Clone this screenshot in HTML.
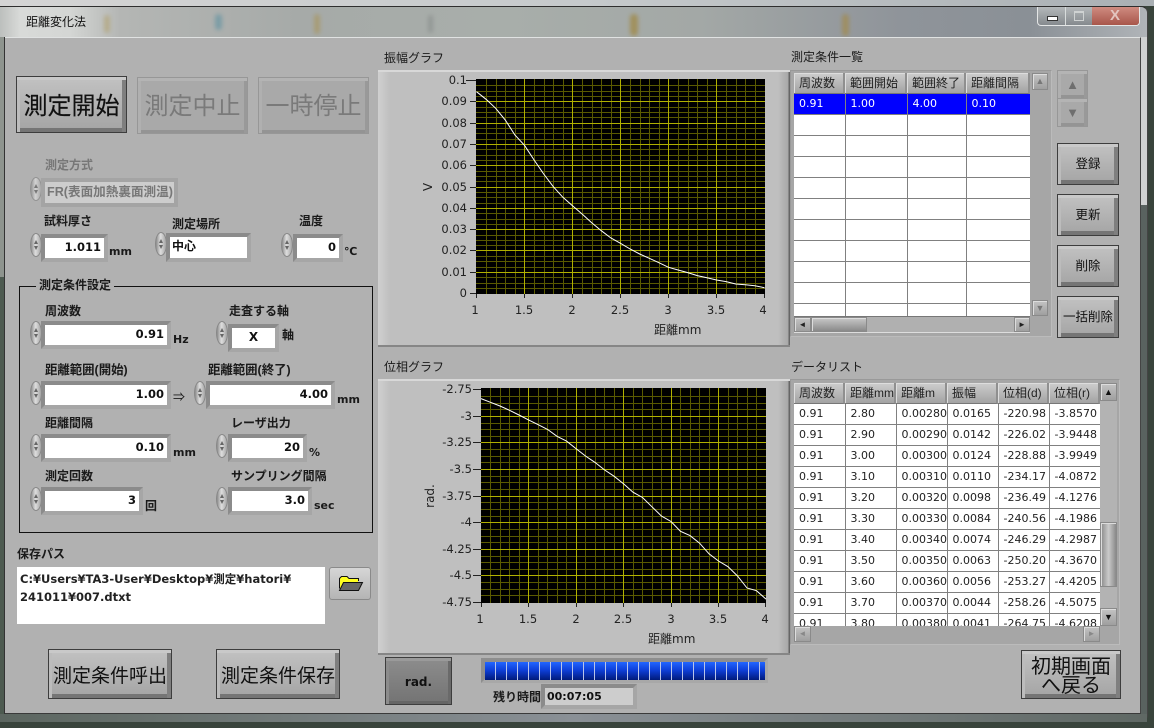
<!DOCTYPE html>
<html lang="ja"><head><meta charset="utf-8"><title>距離変化法</title>
<style>
html,body{margin:0;padding:0}
body{width:1154px;height:728px;overflow:hidden;position:relative;background:#39443c;font-family:"Liberation Sans","Noto Sans CJK JP",sans-serif;color:#111}
div{box-sizing:border-box}
.a,.t,.s,.f,.b,.d{position:absolute}
.t{white-space:nowrap;line-height:16px;font-size:12px;font-weight:700;color:#1a1a1a}
.r{font-weight:400}
.g{color:#777}
.u{font-family:"DejaVu Sans","Noto Sans CJK JP",sans-serif;font-weight:700;font-size:11px}
.s{width:12px;height:24px;border-radius:50%;background:linear-gradient(90deg,#8c8c8c,#dedede 45%,#a5a5a5);border:1px solid #888}
.s:before,.s:after{content:"";position:absolute;left:3px;border-left:2px solid transparent;border-right:2px solid transparent}
.s:before{top:6px;border-bottom:4px solid #666}
.s:after{bottom:6px;border-top:4px solid #666}
.f{border-style:solid;border-width:4px;border-color:#8b8b8b #a6a6a6 #a6a6a6 #8b8b8b;background:#fff;font:700 11.5px/19px "DejaVu Sans","Noto Sans CJK JP",sans-serif;text-align:right;padding:0 3px;color:#111;white-space:nowrap;overflow:hidden}
.b{background:linear-gradient(#c2c2c2,#a4a4a4);border:1px solid #3d3d3d;box-shadow:inset 0 3px 0 #c9c9c9,inset 3px 0 0 #bcbcbc,inset -4px 0 0 #7f7f7f,inset 0 -4px 0 #757575;text-align:center;color:#111;white-space:nowrap}
.x{background:#a9a9a9;border:1px solid #979797;box-shadow:inset 0 3px 0 #b4b4b4,inset 3px 0 0 #b0b0b0,inset -3px 0 0 #999,inset 0 -3px 0 #949494;color:#7a7a7a}
.d{background:linear-gradient(#c3c3c3,#9f9f9f);border:1px solid #8a8a8a;box-shadow:inset 1px 1px 0 #ddd;font-size:9px;line-height:14px;text-align:center;color:#222;overflow:hidden}
.gf{position:absolute;left:378px;width:412px;background:linear-gradient(90deg,#d0d0d0 0,#bfbfbf 12px,#bfbfbf 400px,#a8a8a8 410px,#666 411px);border-top:2px solid #d8d8d8;border-bottom:2px solid #868686}
.tb{position:absolute;overflow:hidden;background:#fff}
table{border-collapse:collapse;table-layout:fixed;font:11px/20px "DejaVu Sans","Noto Sans CJK JP",sans-serif;color:#222}
td{border:solid #808080;border-width:0 1px 1px 0;height:20px;padding:0 0 0 5px;overflow:hidden;white-space:nowrap;box-sizing:content-box}
.h{position:absolute;top:0;height:21px;background:linear-gradient(#cdcdcd,#a3a3a3);border-right:2px solid #8f8f8f;border-bottom:1px solid #777;box-shadow:inset 1px 1px 0 #ddd;font-size:12px;line-height:20px;padding-left:5px;white-space:nowrap;overflow:hidden;color:#222}
.sel td{background:#0000ff;color:#fff}
.bl{position:absolute;border-radius:5px;filter:blur(2px)}
</style></head><body>

<!-- window chrome -->
<div class="a" style="left:0;top:0;width:1154px;height:6px;background:linear-gradient(90deg,#d4d4d4,#c6cacc 50%,#aab0b4)"></div>
<div class="a" style="left:0;top:6px;width:1148px;height:716px;background:#6f7a78;border-top:1px solid #2e2e2e;border-right:1px solid #444;border-radius:0 7px 7px 0;overflow:hidden">
<div class="a" style="left:0;top:0;width:1147px;height:30px;background:linear-gradient(90deg,#bcbfbd 0,#d8dad8 20px,#d4d6d4 70px,#b4b6b4 120px,#a6aaa8 300px,#a8aeaa 500px,#a3a8a6 700px,#8f949a 900px,#8a9096 1030px,#b0b4b8 1147px)"></div>
</div>
<div class="bl" style="left:104px;top:15px;width:6px;height:18px;background:#b3a67c;opacity:.75"></div>
<div class="bl" style="left:215px;top:14px;width:7px;height:16px;background:#6f98a4;opacity:.8"></div>
<div class="bl" style="left:314px;top:14px;width:6px;height:20px;background:#a89868;opacity:.8"></div>
<div class="bl" style="left:428px;top:15px;width:5px;height:18px;background:#8d9290;opacity:.8"></div>
<div class="bl" style="left:630px;top:14px;width:8px;height:22px;background:#a08c50;opacity:.85"></div>
<div class="bl" style="left:842px;top:14px;width:7px;height:22px;background:#a08c58;opacity:.85"></div>
<div class="a" style="left:1141px;top:37px;width:6px;height:168px;background:#d0d2d2"></div>
<div class="a" style="left:1141px;top:205px;width:6px;height:512px;background:#59625f"></div>
<div class="a" style="left:0;top:37px;width:4px;height:240px;background:#8e948e"></div>
<div class="a" style="left:0;top:277px;width:4px;height:445px;background:#4d5a50"></div>
<div class="a" style="left:0;top:714px;width:1147px;height:8px;background:linear-gradient(90deg,#5c6660,#8a9096 50%,#5f6864)"></div>
<div class="t" style="left:26px;top:14px;font-weight:400;color:#111">距離変化法</div>

<!-- window buttons -->
<div class="a" style="left:1037px;top:7px;width:103px;height:19px;border:1px solid #e4e6e6;border-top:0;border-radius:0 0 4px 4px;overflow:hidden;background:linear-gradient(#b4b8ba,#858a8e)">
  <div class="a" style="left:27px;top:0;width:1px;height:18px;background:#d8dcdc"></div>
  <div class="a" style="left:9px;top:9px;width:11px;height:5px;background:#fff;border:1px solid #333"></div>
  <div class="a" style="left:36px;top:4px;width:10px;height:10px;border:1px solid #cfd2d2;border-top-width:2px"></div>
  <div class="a" style="left:54px;top:0;width:49px;height:18px;background:linear-gradient(#cf8b80,#a8564a)"></div>
  <div class="t r" style="left:72px;top:1px;font-size:15px;font-weight:700;color:#e3c5bf">X</div>
</div>

<!-- panel -->
<div class="a" style="left:4px;top:37px;width:1137px;height:677px;background:#b1b1b1;border:1px solid #e0e2e2;border-bottom-color:#3a3a3a;border-right-color:#444"></div>
<div class="a" style="left:4px;top:37px;width:1px;height:677px;background:#333"></div>

<!-- top buttons -->
<div class="b" style="left:16px;top:76px;width:111px;height:57px;font-size:24px;line-height:60px;-webkit-text-stroke:.15px #111">測定開始</div>
<div class="b x" style="left:137px;top:77px;width:111px;height:57px;font-size:24px;line-height:58px">測定中止</div>
<div class="b x" style="left:258px;top:77px;width:111px;height:57px;font-size:24px;line-height:58px">一時停止</div>

<div class="t g" style="left:45px;top:157px">測定方式</div>
<div class="s" style="left:30px;top:177px;opacity:.75"></div>
<div class="f" style="left:41px;top:178px;width:137px;height:29px;background:#cdcdcd;border-color:#a4a4a4;color:#777;text-align:left;padding:0 0 0 2px;font:700 12.6px/20px 'Liberation Sans','Noto Sans CJK JP',sans-serif">FR(表面加熱裏面測温)</div>

<div class="t" style="left:44px;top:213px">試料厚さ</div>
<div class="s" style="left:30px;top:233px"></div>
<div class="f" style="left:41px;top:234px;width:67px;height:28px">1.011</div>
<div class="t u" style="left:109px;top:244px">mm</div>

<div class="t" style="left:172px;top:216px">測定場所</div>
<div class="s" style="left:155px;top:232px"></div>
<div class="f" style="left:166px;top:233px;width:85px;height:29px;text-align:left;padding-left:2px;font-size:12px">中心</div>

<div class="t" style="left:299px;top:213px">温度</div>
<div class="s" style="left:281px;top:233px"></div>
<div class="f" style="left:293px;top:234px;width:50px;height:28px">0</div>
<div class="t u" style="left:344px;top:244px">℃</div>

<!-- group -->
<div class="a" style="left:19px;top:286px;width:354px;height:247px;border:1px solid #111"></div>
<div class="t" style="left:36px;top:277px;background:#b1b1b1;padding:0 3px">測定条件設定</div>

<div class="t" style="left:45px;top:303px">周波数</div>
<div class="s" style="left:30px;top:321px"></div>
<div class="f" style="left:41px;top:321px;width:130px;height:28px">0.91</div>
<div class="t u" style="left:173px;top:332px">Hz</div>

<div class="t" style="left:229px;top:303px">走査する軸</div>
<div class="s" style="left:216px;top:321px"></div>
<div class="f" style="left:228px;top:324px;width:51px;height:28px;text-align:center;font-size:12px">X</div>
<div class="t" style="left:282px;top:327px">軸</div>

<div class="t" style="left:45px;top:362px;font-size:12.4px">距離範囲(開始)</div>
<div class="s" style="left:30px;top:381px"></div>
<div class="f" style="left:41px;top:381px;width:130px;height:28px">1.00</div>
<div class="t" style="left:173px;top:389px;font-weight:400">⇒</div>

<div class="t" style="left:208px;top:362px;font-size:12.4px">距離範囲(終了)</div>
<div class="s" style="left:194px;top:381px"></div>
<div class="f" style="left:206px;top:381px;width:129px;height:28px">4.00</div>
<div class="t u" style="left:337px;top:392px">mm</div>

<div class="t" style="left:45px;top:415px">距離間隔</div>
<div class="s" style="left:30px;top:434px"></div>
<div class="f" style="left:41px;top:434px;width:130px;height:28px">0.10</div>
<div class="t u" style="left:173px;top:445px">mm</div>

<div class="t" style="left:231px;top:415px">レーザ出力</div>
<div class="s" style="left:216px;top:434px"></div>
<div class="f" style="left:228px;top:434px;width:79px;height:28px">20</div>
<div class="t u" style="left:309px;top:445px">%</div>

<div class="t" style="left:45px;top:468px">測定回数</div>
<div class="s" style="left:30px;top:487px"></div>
<div class="f" style="left:41px;top:487px;width:102px;height:28px">3</div>
<div class="t" style="left:145px;top:498px">回</div>

<div class="t" style="left:231px;top:468px">サンプリング間隔</div>
<div class="s" style="left:216px;top:487px"></div>
<div class="f" style="left:228px;top:487px;width:84px;height:28px">3.0</div>
<div class="t u" style="left:314px;top:498px">sec</div>

<!-- save path -->
<div class="t" style="left:17px;top:546px">保存パス</div>
<div class="a" style="left:17px;top:567px;width:308px;height:57px;background:#fff;padding:3px 3px;font:700 11.5px/18px 'DejaVu Sans','Noto Sans CJK JP',sans-serif;color:#222;white-space:nowrap">C:¥Users¥TA3-User¥Desktop¥測定¥hatori¥<br>241011¥007.dtxt</div>
<div class="a" style="left:329px;top:567px;width:42px;height:33px;background:linear-gradient(#d6d6d6,#b4b4b4);border:1px solid #8a8a8a;border-radius:3px">
<svg width="40" height="31" style="position:absolute;left:0;top:0"><path d="M9.5 20.5V10.5L11.5 8.5H17L19 10.5H28.5V13" fill="#ffff20" stroke="#111"/><rect x="10" y="11" width="18" height="3" fill="#ffff20"/><path d="M9.5 22.5L13.5 14.5H32.5L28.5 22.5Z" fill="#666" stroke="#111"/></svg></div>

<div class="b" style="left:48px;top:649px;width:124px;height:50px;font-size:19px;line-height:53px">測定条件呼出</div>
<div class="b" style="left:216px;top:649px;width:124px;height:50px;font-size:19px;line-height:53px">測定条件保存</div>

<!-- graphs -->
<div class="t r" style="left:384px;top:50px">振幅グラフ</div>
<div class="gf" style="top:70px;height:277px"></div>
<div class="t r" style="left:384px;top:359px">位相グラフ</div>
<div class="gf" style="top:379px;height:276px"></div>

<svg class="a" width="1154" height="728" style="left:0;top:0;position:absolute" font-family="'DejaVu Sans','Noto Sans CJK JP',sans-serif" font-size="11.5" fill="#222">
<rect x="476" y="79" width="289" height="215" fill="#000"/>
<path shape-rendering="crispEdges" stroke="#5a5a00" fill="none" d="M486.5 79V294M496.5 79V294M505.5 79V294M515.5 79V294M534.5 79V294M544.5 79V294M553.5 79V294M563.5 79V294M582.5 79V294M592.5 79V294M601.5 79V294M611.5 79V294M630.5 79V294M640.5 79V294M649.5 79V294M659.5 79V294M678.5 79V294M688.5 79V294M697.5 79V294M707.5 79V294M726.5 79V294M736.5 79V294M745.5 79V294M755.5 79V294M476 85.5H765M476 91.5H765M476 96.5H765M476 107.5H765M476 112.5H765M476 117.5H765M476 128.5H765M476 133.5H765M476 139.5H765M476 149.5H765M476 155.5H765M476 160.5H765M476 171.5H765M476 176.5H765M476 181.5H765M476 192.5H765M476 197.5H765M476 203.5H765M476 213.5H765M476 219.5H765M476 224.5H765M476 235.5H765M476 240.5H765M476 245.5H765M476 256.5H765M476 261.5H765M476 267.5H765M476 277.5H765M476 283.5H765M476 288.5H765"/>
<path shape-rendering="crispEdges" stroke="#b0b000" fill="none" d="M524.5 79V294M572.5 79V294M620.5 79V294M668.5 79V294M716.5 79V294M476 101.5H765M476 123.5H765M476 144.5H765M476 165.5H765M476 187.5H765M476 208.5H765M476 229.5H765M476 250.5H765M476 272.5H765"/>
<polyline fill="none" stroke="#fff" points="476.5,91.7 486.1,99.3 495.7,108.3 505.3,120 514.9,135 524.5,145.3 534.1,160 543.7,174 553.3,186.7 562.9,197.3 572.5,205.7 582.1,214 591.7,222.7 601.3,230.7 610.9,238 620.5,243.3 630.1,249 639.7,254 649.3,258.3 658.9,262.7 668.5,267.3 678.1,270 687.7,272.6 697.3,275.6 706.9,277.7 716.5,280 726.1,281.6 735.7,284 745.3,284.8 754.9,285.8 764.5,287.7"/>
<path shape-rendering="crispEdges" stroke="#222" fill="none" d="M466 80.5H476M470 101.5H476M470 123.5H476M470 144.5H476M470 165.5H476M470 187.5H476M470 208.5H476M470 229.5H476M470 250.5H476M470 272.5H476M470 293.5H476M476.5 294V298M524.5 294V298M572.5 294V298M620.5 294V298M668.5 294V298M716.5 294V298M764.5 294V298"/>
<g text-anchor="end"><text x="467" y="84">0.1</text><text x="467" y="105">0.09</text><text x="467" y="127">0.08</text><text x="467" y="148">0.07</text><text x="467" y="169">0.06</text><text x="467" y="191">0.05</text><text x="467" y="212">0.04</text><text x="467" y="233">0.03</text><text x="467" y="254">0.02</text><text x="467" y="276">0.01</text><text x="467" y="297">0</text></g>
<g text-anchor="middle"><text x="475" y="314">1</text><text x="524" y="314">1.5</text><text x="572" y="314">2</text><text x="620" y="314">2.5</text><text x="668" y="314">3</text><text x="716" y="314">3.5</text><text x="763" y="314">4</text></g>
<text x="654" y="334" font-size="12">距離mm</text>
<text transform="translate(432,187) rotate(-90)" text-anchor="middle" font-size="12">V</text>

<rect x="481" y="388" width="285" height="215" fill="#000"/>
<path shape-rendering="crispEdges" stroke="#5a5a00" fill="none" d="M490.5 388V603M500.5 388V603M509.5 388V603M519.5 388V603M538.5 388V603M547.5 388V603M557.5 388V603M566.5 388V603M585.5 388V603M595.5 388V603M604.5 388V603M614.5 388V603M633.5 388V603M642.5 388V603M652.5 388V603M661.5 388V603M680.5 388V603M690.5 388V603M699.5 388V603M709.5 388V603M728.5 388V603M737.5 388V603M747.5 388V603M756.5 388V603M481 396.5H766M481 403.5H766M481 409.5H766M481 423.5H766M481 429.5H766M481 436.5H766M481 449.5H766M481 456.5H766M481 462.5H766M481 476.5H766M481 482.5H766M481 489.5H766M481 502.5H766M481 509.5H766M481 516.5H766M481 529.5H766M481 536.5H766M481 542.5H766M481 556.5H766M481 562.5H766M481 569.5H766M481 582.5H766M481 589.5H766M481 595.5H766"/>
<path shape-rendering="crispEdges" stroke="#b0b000" fill="none" d="M528.5 388V603M576.5 388V603M623.5 388V603M671.5 388V603M718.5 388V603M481 416.5H766M481 442.5H766M481 469.5H766M481 496.5H766M481 522.5H766M481 549.5H766M481 575.5H766"/>
<polyline fill="none" stroke="#fff" points="481,398.6 490.5,402.3 500,406 509.5,410.3 519,415 528.5,419.9 538,424.6 547.5,429.4 557,436.3 566.5,441.1 576,448.6 585.5,456 595,462.4 604.5,469.9 614,476.2 623.5,483.7 633,492.2 642.5,497.5 652,506.8 661.5,516.1 671,521.5 680.5,531.3 690,535.6 699.5,543.1 709,553.8 718.5,561 728,566.7 737.5,576 747,588 756.5,590.7 766,599.1"/>
<path shape-rendering="crispEdges" stroke="#222" fill="none" d="M473 389.5H481M473 416.5H481M473 442.5H481M473 469.5H481M473 496.5H481M473 522.5H481M473 549.5H481M473 575.5H481M473 602.5H481M481.5 603V607M528.5 603V607M576.5 603V607M623.5 603V607M671.5 603V607M718.5 603V607M765.5 603V607"/>
<g text-anchor="end"><text x="472" y="393">-2.75</text><text x="472" y="420">-3</text><text x="472" y="446">-3.25</text><text x="472" y="473">-3.5</text><text x="472" y="500">-3.75</text><text x="472" y="526">-4</text><text x="472" y="553">-4.25</text><text x="472" y="579">-4.5</text><text x="472" y="606">-4.75</text></g>
<g text-anchor="middle"><text x="480" y="623">1</text><text x="528" y="623">1.5</text><text x="576" y="623">2</text><text x="623" y="623">2.5</text><text x="671" y="623">3</text><text x="718" y="623">3.5</text><text x="765" y="623">4</text></g>
<text x="648" y="643" font-size="12">距離mm</text>
<text transform="translate(434,496) rotate(-90)" text-anchor="middle" font-size="12">rad.</text>
</svg>

<!-- bottom center -->
<div class="b" style="left:385px;top:657px;width:67px;height:48px;background:linear-gradient(#8d8d8d,#737373);box-shadow:inset 0 3px 0 #9a9a9a,inset 3px 0 0 #8c8c8c,inset -3px 0 0 #6a6a6a,inset 0 -3px 0 #656565;font:700 12px/48px 'DejaVu Sans',sans-serif;color:#111">rad.</div>
<div class="a" style="left:481px;top:658px;width:287px;height:25px;background:#a4a4a4;border:4px solid;border-color:#8e8e8e #a8a8a8 #a8a8a8 #8e8e8e"></div>
<div class="a" style="left:485px;top:662px;width:280px;height:18px;background:repeating-linear-gradient(90deg,transparent 0,transparent 10px,#b8c4e8 10px,#b8c4e8 11px),linear-gradient(#2266ff,#0e3fd8 45%,#001a7a)"></div>
<div class="t" style="left:493px;top:689px">残り時間</div>
<div class="f" style="left:541px;top:684px;width:96px;height:25px;background:#cdcdcd;text-align:left;padding:0 0 0 2px;line-height:17px;font-size:11px">00:07:05</div>

<!-- table 1 -->
<div class="t r" style="left:791px;top:49px">測定条件一覧</div>
<div class="a" style="left:790px;top:70px;width:262px;height:267px;background:#a6a6a6;border:1px solid #bbb;border-top-color:#999;border-left-color:#999"></div>
<div class="tb" style="left:794px;top:73px;width:236px;height:243px">
<div class="h" style="left:0;width:51px">周波数</div><div class="h" style="left:51px;width:62px">範囲開始</div><div class="h" style="left:113px;width:59px">範囲終了</div><div class="h" style="left:172px;width:64px">距離間隔</div>
<table style="position:absolute;left:0;top:21px;width:236px"><colgroup><col style="width:51px"><col style="width:62px"><col style="width:59px"><col style="width:64px"></colgroup>
<tr class="sel"><td>0.91</td><td>1.00</td><td>4.00</td><td>0.10</td></tr>
<tr><td></td><td></td><td></td><td></td></tr><tr><td></td><td></td><td></td><td></td></tr><tr><td></td><td></td><td></td><td></td></tr><tr><td></td><td></td><td></td><td></td></tr><tr><td></td><td></td><td></td><td></td></tr><tr><td></td><td></td><td></td><td></td></tr><tr><td></td><td></td><td></td><td></td></tr><tr><td></td><td></td><td></td><td></td></tr><tr><td></td><td></td><td></td><td></td></tr><tr><td></td><td></td><td></td><td></td></tr><tr><td></td><td></td><td></td><td></td></tr>
</table></div>
<div class="d" style="left:1032px;top:73px;width:16px;height:17px;color:#777">▲</div>
<div class="d" style="left:1032px;top:300px;width:16px;height:16px;color:#777">▼</div>
<div class="a" style="left:794px;top:316px;width:236px;height:17px;background:#b0b0b0;border-top:1px solid #777;border-bottom:1px solid #ddd"></div>
<div class="d" style="left:794px;top:317px;width:17px;height:15px;font-size:8px;line-height:13px">◄</div>
<div class="d" style="left:811px;top:317px;width:56px;height:15px;background:linear-gradient(#c8c8c8,#8a8a8a)"></div>
<div class="d" style="left:1014px;top:317px;width:16px;height:15px;font-size:8px;line-height:13px">►</div>

<div class="b x" style="left:1057px;top:70px;width:31px;height:29px;font-size:13px;line-height:27px;color:#6e6e6e">▲</div>
<div class="b x" style="left:1057px;top:98px;width:31px;height:29px;font-size:13px;line-height:27px;color:#6e6e6e">▼</div>
<div class="b" style="left:1057px;top:143px;width:62px;height:42px;font-size:12.5px;line-height:41px">登録</div>
<div class="b" style="left:1057px;top:194px;width:62px;height:42px;font-size:12.5px;line-height:41px">更新</div>
<div class="b" style="left:1057px;top:245px;width:62px;height:42px;font-size:12.5px;line-height:41px">削除</div>
<div class="b" style="left:1057px;top:296px;width:62px;height:42px;font-size:12.5px;line-height:41px">一括削除</div>

<!-- table 2 -->
<div class="t r" style="left:791px;top:359px">データリスト</div>
<div class="a" style="left:790px;top:379px;width:330px;height:266px;background:#a6a6a6;border:1px solid #bbb;border-top-color:#999;border-left-color:#999"></div>
<div class="tb" style="left:794px;top:383px;width:306px;height:243px">
<div class="h" style="left:0;width:51px">周波数</div><div class="h" style="left:51px;width:51px">距離mm</div><div class="h" style="left:102px;width:51px">距離m</div><div class="h" style="left:153px;width:51px">振幅</div><div class="h" style="left:204px;width:51px">位相(d)</div><div class="h" style="left:255px;width:51px">位相(r)</div>
<table style="position:absolute;left:0;top:21px;width:306px"><colgroup><col style="width:51px"><col style="width:51px"><col style="width:51px"><col style="width:51px"><col style="width:51px"><col style="width:51px"></colgroup>
<tr><td>0.91</td><td>2.80</td><td>0.00280</td><td>0.0165</td><td>-220.98</td><td>-3.8570</td></tr>
<tr><td>0.91</td><td>2.90</td><td>0.00290</td><td>0.0142</td><td>-226.02</td><td>-3.9448</td></tr>
<tr><td>0.91</td><td>3.00</td><td>0.00300</td><td>0.0124</td><td>-228.88</td><td>-3.9949</td></tr>
<tr><td>0.91</td><td>3.10</td><td>0.00310</td><td>0.0110</td><td>-234.17</td><td>-4.0872</td></tr>
<tr><td>0.91</td><td>3.20</td><td>0.00320</td><td>0.0098</td><td>-236.49</td><td>-4.1276</td></tr>
<tr><td>0.91</td><td>3.30</td><td>0.00330</td><td>0.0084</td><td>-240.56</td><td>-4.1986</td></tr>
<tr><td>0.91</td><td>3.40</td><td>0.00340</td><td>0.0074</td><td>-246.29</td><td>-4.2987</td></tr>
<tr><td>0.91</td><td>3.50</td><td>0.00350</td><td>0.0063</td><td>-250.20</td><td>-4.3670</td></tr>
<tr><td>0.91</td><td>3.60</td><td>0.00360</td><td>0.0056</td><td>-253.27</td><td>-4.4205</td></tr>
<tr><td>0.91</td><td>3.70</td><td>0.00370</td><td>0.0044</td><td>-258.26</td><td>-4.5075</td></tr>
<tr><td>0.91</td><td>3.80</td><td>0.00380</td><td>0.0041</td><td>-264.75</td><td>-4.6208</td></tr>
</table></div>
<div class="a" style="left:1100px;top:383px;width:17px;height:243px;background:#b3b3b3"></div>
<div class="d" style="left:1100px;top:383px;width:17px;height:18px;line-height:16px;color:#111">▲</div>
<div class="d" style="left:1100px;top:522px;width:17px;height:65px;background:linear-gradient(90deg,#8a8a8a,#cacaca 50%,#8a8a8a)"></div>
<div class="d" style="left:1100px;top:608px;width:17px;height:18px;line-height:16px;color:#111">▼</div>
<div class="d" style="left:794px;top:626px;width:17px;height:16px;font-size:8px;line-height:14px;color:#888">◄</div>
<div class="d" style="left:1083px;top:626px;width:17px;height:16px;font-size:8px;line-height:14px;color:#888">►</div>

<div class="b" style="left:1021px;top:650px;width:100px;height:49px;font-size:20px;line-height:19px;padding-top:7px">初期画面<br>へ戻る</div>

</body></html>
